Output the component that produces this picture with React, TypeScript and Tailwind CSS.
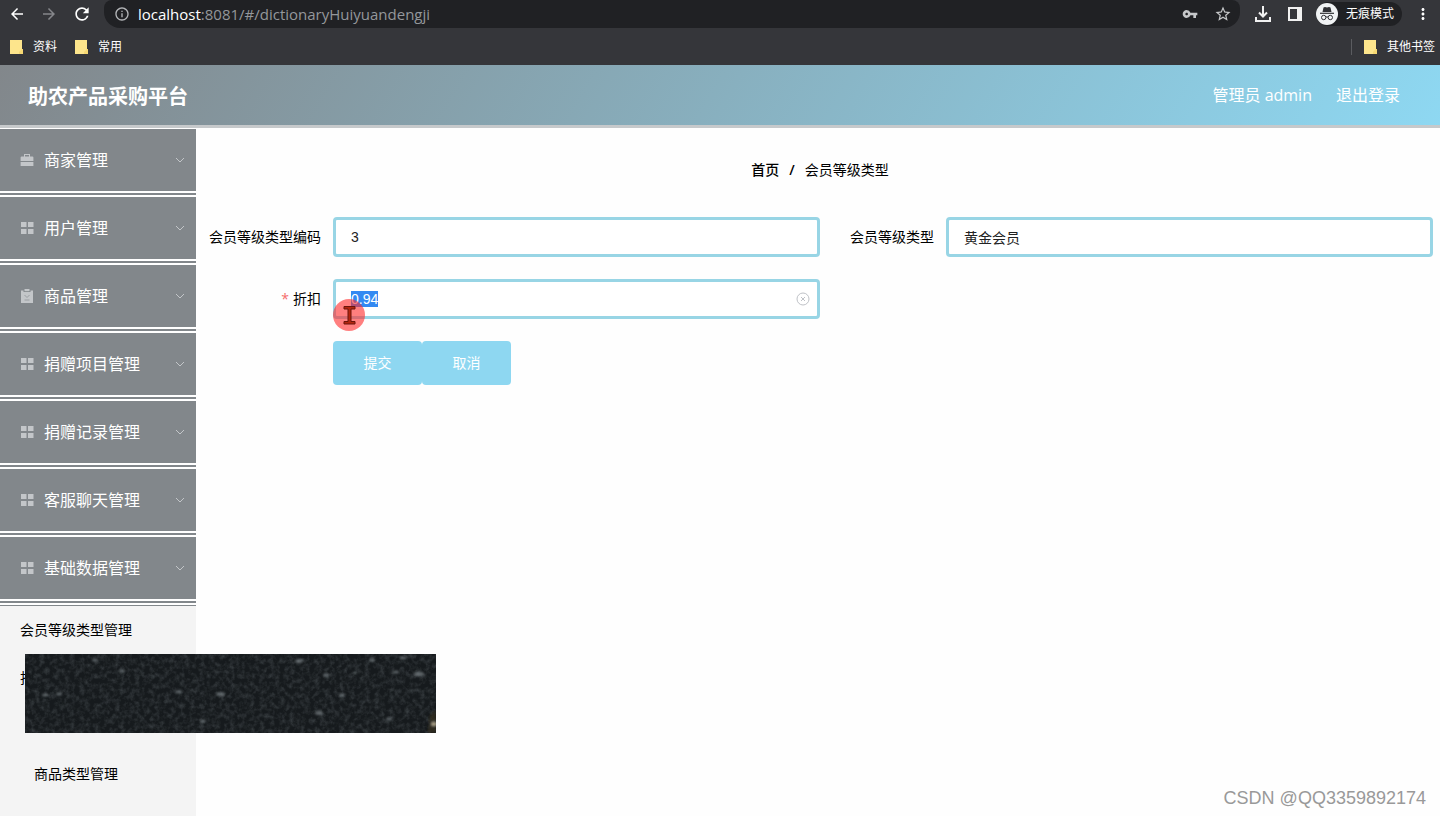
import { useEffect, useRef } from "react";
import {
  MdArrowBack,
  MdArrowForward,
  MdRefresh,
  MdInfoOutline,
  MdVpnKey,
  MdStarBorder,
  MdMoreVert,
} from "react-icons/md";

type MenuIcon = "case" | "grid" | "clip";

const MENU: { label: string; icon: MenuIcon }[] = [
  { label: "商家管理", icon: "case" },
  { label: "用户管理", icon: "grid" },
  { label: "商品管理", icon: "clip" },
  { label: "捐赠项目管理", icon: "grid" },
  { label: "捐赠记录管理", icon: "grid" },
  { label: "客服聊天管理", icon: "grid" },
  { label: "基础数据管理", icon: "grid" },
];

// x, y, radius of the bright grains on the dark strip
const GRAINS = [
  [70, 6, 3],
  [97, 17, 3],
  [274, 7, 4],
  [347, 6, 3],
  [378, 4, 3],
  [394, 20, 5],
  [330, 19, 2],
  [371, 18, 3],
  [301, 21, 3],
  [196, 40, 4],
  [154, 38, 3],
  [317, 41, 3],
  [294, 59, 4],
  [364, 65, 3],
  [178, 67, 3],
  [20, 41, 3],
  [34, 40, 3],
];

const MenuGlyph = ({ icon }: { icon: MenuIcon }) => {
  return (
    <svg viewBox="0 0 14 14" className="h-3.5 w-3.5 shrink-0" fill="#c3c6c9">
      {icon === "case" && (
        <>
          <path d="M4 3.500V1h6v2.500h2.400a1 1 0 0 1 1 1V8H.6V4.500a1 1 0 0 1 1-1zm1 0h4V2H5z" />
          <path d="M.6 9h12.800v4H.6z" />
        </>
      )}
      {icon === "grid" && (
        <path d="M1 1h5.500v5H1zM8 1h5.500v5H8zM1 8h5.500v5H1zM8 8h5.500v5H8z" />
      )}
      {icon === "clip" && (
        <>
          <path d="M1 1.500h2.500V3h7V1.500H13V14H1z" />
          <path d="M4.500 0h5v2.200h-5z" />
          <path d="M4.500 6l2.500 2.500L9.500 6M4.500 11h5" fill="none" stroke="#9a9ea2" />
        </>
      )}
    </svg>
  );
};

const Folder = () => {
  return (
    <svg viewBox="0 0 13 14" className="h-3.5 w-[13px] shrink-0">
      <path d="M0 0h12v9h1v5H0z" fill="#fde58c" />
      <path d="M9 12l3-3h1v5H9z" fill="#f6d873" />
    </svg>
  );
};

const BrowserBar = () => {
  return (
    <div className="h-[65px] bg-[#35363a] text-xs text-white">
      <div className="flex h-7 items-center pl-2 pr-2">
        <button type="button" aria-label="back" className="mr-3.5 text-lg text-white">
          <MdArrowBack />
        </button>
        <button type="button" aria-label="forward" className="mr-3.5 text-lg text-[#85868a]">
          <MdArrowForward />
        </button>
        <button type="button" aria-label="reload" className="mr-3 text-xl text-white">
          <MdRefresh />
        </button>
        <div className="flex h-7 flex-1 items-center rounded-b-2xl rounded-t-lg bg-[#202124] pl-2.5 pr-2">
          <MdInfoOutline className="mr-2 text-base text-[#b4b6b9]" />
          <p className="flex-1 text-[15px] leading-5 text-[#94979b]">
            <span className="text-white">localhost</span>:8081/#/dictionaryHuiyuandengji
          </p>
          <MdVpnKey className="mr-4 text-base text-[#c6c8ca]" />
          <MdStarBorder className="text-lg text-[#c6c8ca]" />
        </div>
        <svg viewBox="0 0 18 18" className="ml-3.5 h-[18px] w-[18px]" fill="none" stroke="#f1f1f1" strokeWidth="2">
          <path d="M9 1v10M5 7.500l4 4 4-4M2 12v4h14v-4" />
        </svg>
        <svg viewBox="0 0 14 14" className="ml-4 h-3.5 w-3.5">
          <path d="M1 1h12v12H1z" fill="none" stroke="#f1f1f1" strokeWidth="2" />
          <path d="M9 1h4v12H9z" fill="#f1f1f1" />
        </svg>
        <div className="ml-3.5 flex h-6 items-center gap-2 rounded-full bg-[#202124] pr-2">
          <svg viewBox="0 0 22 22" className="h-[22px] w-[22px]">
            <circle cx="11" cy="11" r="11" fill="#f1f3f4" />
            <path d="M7.500 4.500l1.500-.5 2 .5 2-.5 1.500.5L15.500 9h-9z" fill="#303135" />
            <path d="M4 10.300h14" stroke="#303135" strokeWidth="1.200" />
            <circle cx="7.700" cy="14.500" r="2.200" fill="none" stroke="#303135" />
            <circle cx="14.300" cy="14.500" r="2.200" fill="none" stroke="#303135" />
            <path d="M9.900 14.200q1.100-.8 2.200 0" fill="none" stroke="#303135" />
          </svg>
          <span>无痕模式</span>
        </div>
        <button type="button" aria-label="more" className="ml-3 text-lg">
          <MdMoreVert />
        </button>
      </div>
      <div className="flex h-[37px] items-center pl-2.5 pr-[5px]">
        <a href="#" className="flex items-center gap-2.5">
          <Folder />
          资料
        </a>
        <a href="#" className="ml-[18px] flex items-center gap-2.5">
          <Folder />
          常用
        </a>
        <span className="ml-auto mr-3 h-4 w-px bg-[#5b5c60]" />
        <a href="#" className="flex items-center gap-2.5">
          <Folder />
          其他书签
        </a>
      </div>
    </div>
  );
};

const SideMenu = () => {
  return (
    <nav className="w-[196px] shrink-0 bg-[#f4f4f4] text-black">
      <ul className="border-b border-t border-b-[#82878b] border-t-white">
        {MENU.map((item) => (
          <li key={item.label} className="border-b-6 border-double border-white bg-[#82878b]">
            <button
              type="button"
              className="flex h-[62px] w-full items-center gap-2.5 pl-5 pr-2.5 text-base text-white"
            >
              <MenuGlyph icon={item.icon} />
              {item.label}
              <svg viewBox="0 0 12 12" className="ml-auto h-3 w-3" fill="none" stroke="#c3c6c9">
                <path d="M2 4l4 4 4-4" />
              </svg>
            </button>
          </li>
        ))}
      </ul>
      <ul className="text-sm leading-[48px]">
        <li className="pl-5">
          <a href="#">会员等级类型管理</a>
        </li>
        <li className="pl-5">
          <a href="#">捐</a>
        </li>
        <li className="h-12" />
        <li className="pl-[34px]">
          <a href="#">商品类型管理</a>
        </li>
      </ul>
    </nav>
  );
};

const INPUT =
  "h-10 w-full rounded-[4px] border-3 border-[#98d5e5] bg-white px-[15px] text-sm text-[#222] outline-none selection:bg-[#3389f2] selection:text-white font-['Liberation_Sans','Noto_Sans_CJK_SC',sans-serif]";

const LevelForm = () => {
  const discountRef = useRef<HTMLInputElement>(null);

  useEffect(() => {
    discountRef.current?.focus();
    discountRef.current?.select();
  }, []);

  return (
    <form
      className="grid grid-cols-2 gap-y-[22px] text-sm text-black"
      onSubmit={(e) => e.preventDefault()}
    >
      <div className="flex items-center">
        <label htmlFor="code" className="w-[126px] shrink-0 pr-3 text-right">
          会员等级类型编码
        </label>
        <input id="code" type="text" defaultValue="3" className={INPUT} />
      </div>
      <div className="flex items-center">
        <label htmlFor="level" className="w-[126px] shrink-0 pr-3 text-right">
          会员等级类型
        </label>
        <input id="level" type="text" defaultValue="黄金会员" className={INPUT} />
      </div>
      <div className="relative col-start-1 flex items-center">
        <label htmlFor="discount" className="w-[126px] shrink-0 pr-3 text-right">
          <span className="mr-1 text-[#f56c6c]">*</span>
          折扣
        </label>
        <input id="discount" ref={discountRef} type="text" defaultValue="0.94" className={INPUT} />
        <button type="button" aria-label="clear" className="absolute right-2.5">
          <svg viewBox="0 0 14 14" className="h-3.5 w-3.5" fill="none" stroke="#bfc2c7">
            <circle cx="7" cy="7" r="6" />
            <path d="M5 5l4 4M9 5l-4 4" />
          </svg>
        </button>
        {/* pointer highlight */}
        <svg viewBox="0 0 32 32" className="absolute left-[126px] top-5 h-8 w-8">
          <circle cx="16" cy="16" r="16" fill="#ff2a2a" fillOpacity="0.6" />
          <path
            d="M11 7.500h11v2.500h-4v12.500h4V25H11v-2.500h4V10h-4z"
            fill="#b3260f"
            stroke="#6b150a"
          />
        </svg>
      </div>
      <div className="col-start-1 flex pl-[126px] text-white">
        <button type="submit" className="h-11 w-[89px] rounded-[4px] bg-[#8ed7f1]">
          提交
        </button>
        <button type="button" className="h-11 w-[89px] rounded-[4px] bg-[#8ed7f1]">
          取消
        </button>
      </div>
    </form>
  );
};

const DarkStrip = () => {
  return (
    <svg viewBox="0 0 411 79" className="absolute left-[25px] top-[654px] h-[79px] w-[411px]">
      <filter id="grain" x="0" y="0" width="100%" height="100%">
        <feTurbulence type="fractalNoise" baseFrequency="0.2" numOctaves="3" seed="4" />
        <feColorMatrix values="0 0 0 0 0.25  0 0 0 0 0.29  0 0 0 0 0.31  0.9 0 0 0 -0.35" />
      </filter>
      <filter id="soft">
        <feGaussianBlur stdDeviation="0.8" />
      </filter>
      <rect width="411" height="79" fill="#161a1d" />
      <rect width="411" height="79" filter="url(#grain)" opacity="0.6" />
      <g filter="url(#soft)">
        {GRAINS.map(([x, y, r]) => (
          <ellipse key={`${x}-${y}`} cx={x} cy={y} rx={r} ry={r / 2} fill="#8b9296" fillOpacity="0.6" />
        ))}
        <path d="M403 79l2-18 6-4v22z" fill="#3a3420" fillOpacity="0.6" />
        <ellipse cx="409" cy="70" rx="3" ry="2" fill="#a59c84" />
      </g>
    </svg>
  );
};

const App = () => {
  return (
    <div className="relative flex min-h-screen flex-col bg-[#fefefe] font-['Open_Sans','Noto_Sans_CJK_SC',sans-serif]">
      <BrowserBar />
      <header className="flex h-[63px] items-center border-b-3 border-[#c6c9cb] bg-[linear-gradient(120deg,#82878b,#8ed8f2)] bg-origin-border pl-7 pr-10 text-white">
        <h1 className="pt-1 text-xl font-bold">助农产品采购平台</h1>
        <span className="ml-auto text-base">管理员 admin</span>
        <a href="#" className="ml-6 text-base">
          退出登录
        </a>
      </header>
      <div className="flex flex-1">
        <SideMenu />
        <main className="flex-1 pl-[11px] pr-[7px] pt-[31px]">
          <nav className="mb-9 flex items-center justify-center gap-2.5 text-sm leading-[22px] text-black">
            <a href="#" className="font-medium">
              首页
            </a>
            <span className="font-semibold">/</span>
            <span>会员等级类型</span>
          </nav>
          <LevelForm />
        </main>
      </div>
      <DarkStrip />
      <p className="absolute bottom-1.5 right-3.5 font-['Liberation_Sans',sans-serif] text-lg leading-6 text-[#999]">
        CSDN @QQ3359892174
      </p>
    </div>
  );
};

export default App;
